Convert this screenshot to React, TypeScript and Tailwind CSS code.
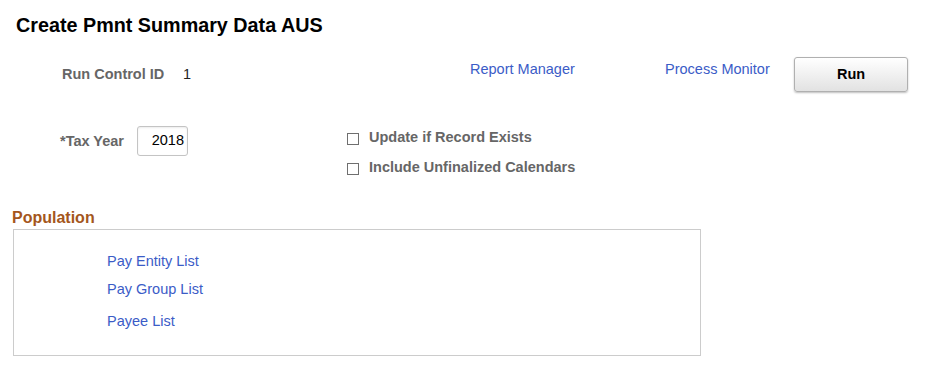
import React from "react";

function Checkbox({ label }: { label: string }) {
  return (
    <label className="flex h-[20px] items-center gap-[10px]">
      <span className="mt-[2px] block h-[12px] w-[12px] border border-[#6f6f6f] bg-white" />
      <span className="text-[14.5px] font-bold leading-[17px] text-[#666666]">{label}</span>
    </label>
  );
}

export default function App() {
  return (
    <div
      className="h-[374px] w-[928px] overflow-hidden bg-white pt-[14px]"
      style={{ fontFamily: '"Liberation Sans", Arial, sans-serif' }}
    >
      <h1 className="pl-4 text-[19.75px] font-bold leading-[23px] text-black">
        Create Pmnt Summary Data AUS
      </h1>

      {/* run control row */}
      <div className="mt-[20px] flex h-[35px] items-start">
        <div className="flex w-[470px] pl-[62px] pt-[9px] text-[14.5px] leading-[17px]">
          <span className="w-[121px] font-bold text-[#666666]">Run Control ID</span>
          <span className="text-[#222222]">1</span>
        </div>
        <a className="mt-[4px] w-[195px] text-[14.5px] leading-[17px] text-[#3b5cc7]">Report Manager</a>
        <a className="mt-[4px] w-[129px] text-[14.5px] leading-[17px] text-[#3b5cc7]">Process Monitor</a>
        <button className="h-[35px] w-[114px] rounded-[3px] border border-[#b0b0b0] bg-gradient-to-b from-white to-[#e2e2e2] text-[14.5px] font-bold text-black shadow-[0_1px_2px_rgba(0,0,0,0.25)]">
          Run
        </button>
      </div>

      {/* tax year + options */}
      <div className="mt-[34px] flex items-start">
        <div className="flex items-center pl-[60px]">
          <span className="w-[77px] text-[14.5px] font-bold leading-[17px] text-[#666666]">*Tax Year</span>
          <div className="flex h-[30px] w-[51px] items-center justify-end rounded-[3px] border border-[#c4c4c4] bg-white pr-[3px] text-[14.5px] text-black shadow-[inset_0_1px_2px_rgba(0,0,0,0.08)]">
            2018
          </div>
        </div>
        <div className="ml-[159px] mt-[1.5px] flex flex-col gap-[10px]">
          <Checkbox label="Update if Record Exists" />
          <Checkbox label="Include Unfinalized Calendars" />
        </div>
      </div>

      {/* population */}
      <h2 className="mt-[31.5px] pl-[12px] text-[16px] font-bold leading-[18px] text-[#a4561c]">Population</h2>
      <div className="ml-[13px] mt-[2px] flex h-[127px] w-[688px] flex-col items-start border border-[#cccccc] pl-[93px] pt-[23px] text-[14.5px] leading-[17px] text-[#3b5cc7]">
        <a>Pay Entity List</a>
        <a className="mt-[11px]">Pay Group List</a>
        <a className="mt-[15px]">Payee List</a>
      </div>
    </div>
  );
}
